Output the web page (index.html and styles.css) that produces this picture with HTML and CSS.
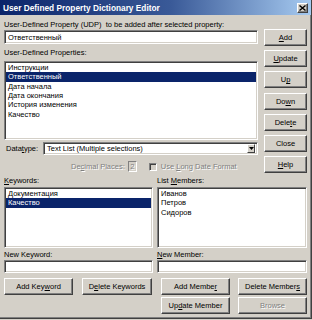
FILE: index.html
```html
<!DOCTYPE html>
<html>
<head>
<meta charset="utf-8">
<link rel="stylesheet" href="styles.css">
</head>
<body>
<div class="window">
  <div class="titlebar">
    <span class="title">User Defined Property Dictionary Editor</span>
    <span class="close"><svg width="7" height="6" viewBox="0 0 7 6"><path d="M0.5 0.5 L6.5 5.5 M6.5 0.5 L0.5 5.5" stroke="#000" stroke-width="1.4" fill="none"/></svg></span>
  </div>
  <div class="main">
    <div class="top">
      <div class="left">
        <div class="lbl">User-Defined Property (UDP)&nbsp; to be added after selected property:</div>
        <div class="field input">Ответственный</div>
        <div class="lbl lbl2">User-Defined Properties:</div>
        <div class="field list biglist">
          <div class="item">Инструкции</div>
          <div class="item sel">Ответственный</div>
          <div class="item">Дата начала</div>
          <div class="item">Дата окончания</div>
          <div class="item">История изменения</div>
          <div class="item">Качество</div>
        </div>
        <div class="dtrow">
          <span class="dtlabel">Data<u>t</u>ype:</span>
          <div class="field select">
            <span class="seltext">Text List (Multiple selections)</span>
            <span class="arrow"><svg width="5" height="3" viewBox="0 0 5 3"><path d="M0 0 H5 L2.5 3 Z" fill="#000"/></svg></span>
          </div>
        </div>
        <div class="decrow">
          <span class="dis">De<u>c</u>imal Places:</span>
          <span class="decbox dis">2</span>
          <span class="check"></span>
          <span class="dis chklabel">Use <u>L</u>ong Date Format</span>
        </div>
      </div>
      <div class="buttons">
        <div class="btn"><u>A</u>dd</div>
        <div class="btn"><u>U</u>pdate</div>
        <div class="btn">U<u>p</u></div>
        <div class="btn">Do<u>w</u>n</div>
        <div class="btn">Dele<u>t</u>e</div>
        <div class="btn">Close</div>
        <div class="btn"><u>H</u>elp</div>
      </div>
    </div>
    <div class="bottom">
      <div class="lbl"><u>K</u>eywords:</div>
      <div class="lbl">List <u>M</u>embers:</div>
      <div class="field list smalllist">
        <div class="item">Документация</div>
        <div class="item sel">Качество</div>
      </div>
      <div class="field list smalllist">
        <div class="item">Иванов</div>
        <div class="item">Петров</div>
        <div class="item">Сидоров</div>
      </div>
      <div class="lbl lbl3">New Keyword:</div>
      <div class="lbl lbl3"><u>N</u>ew Member:</div>
      <div class="field input2"></div>
      <div class="field input2"></div>
      <div class="btnrow">
        <div class="btn wbtn">Add Key<u>w</u>ord</div>
        <div class="btn wbtn2">D<u>e</u>lete Keywords</div>
      </div>
      <div class="btnrow rightrow">
        <div class="btn wbtn">Add Membe<u>r</u></div>
        <div class="btn wbtn">Delete Member<u>s</u></div>
      </div>
      <div class="spacer"></div>
      <div class="btnrow rightrow row2">
        <div class="btn wbtn">Up<u>d</u>ate Member</div>
        <div class="btn wbtn dis">Browse</div>
      </div>
    </div>
  </div>
</div>
</body>
</html>
```
FILE: styles.css
```css
html, body {
  margin: 0;
  padding: 0;
  background: #d4d0c8;
}
body {
  font-family: "Liberation Sans", Arial, sans-serif;
  font-size: 7.5px;
  color: #000;
}
.window {
  width: 312px;
  height: 319px;
  box-sizing: border-box;
  background: #d4d0c8;
  border-right: 1px solid #404040;
  border-bottom: 1px solid #404040;
  box-shadow: inset -1px -1px #808080;
  overflow: hidden;
}
.titlebar {
  height: 15px;
  background: linear-gradient(to right, #0a246a, #3a5a98 55%, #a6caf0);
  display: flex;
  align-items: center;
  justify-content: space-between;
  padding: 0 3px 0 3px;
}
.title {
  color: #fff;
  font-weight: bold;
  font-size: 8.3px;
  white-space: nowrap;
}
.close {
  width: 11px;
  height: 10px;
  box-sizing: border-box;
  background: #d4d0c8;
  border: 1px solid;
  border-color: #fff #404040 #404040 #fff;
  box-shadow: inset -1px -1px #808080;
  display: flex;
  align-items: center;
  justify-content: center;
}
.main {
  padding: 0 4px;
}
.top {
  display: flex;
  gap: 6px;
}
.left {
  width: 254px;
  padding-top: 5px;
}
.lbl {
  height: 9px;
  line-height: 9px;
  white-space: nowrap;
}
.lbl2 {
  margin-top: 4px;
}
.field {
  background: #fff;
  border: 1px solid;
  border-color: #808080 #fff #fff #808080;
  box-shadow: inset 1px 1px #404040, inset -1px -1px #d4d0c8;
  box-sizing: border-box;
}
.input {
  height: 14px;
  margin-top: 1px;
  padding: 2px 3px;
  line-height: 9px;
}
.list {
  padding: 1px;
  overflow: hidden;
}
.biglist {
  margin-top: 4px;
  height: 79px;
}
.item {
  height: 9.33px;
  line-height: 9.33px;
  padding-left: 2px;
  white-space: nowrap;
}
.item.sel {
  background: #0a246a;
  color: #fff;
}
.dtrow {
  display: flex;
  align-items: center;
  margin-top: 2px;
  height: 13px;
}
.dtlabel {
  width: 39px;
  padding-left: 2px;
  box-sizing: border-box;
}
.select {
  flex: 1;
  height: 13px;
  display: flex;
  align-items: center;
  justify-content: space-between;
  padding: 1px 2px 1px 3px;
}
.arrow {
  width: 8px;
  height: 9px;
  box-sizing: border-box;
  background: #d4d0c8;
  border: 1px solid;
  border-color: #fff #404040 #404040 #fff;
  display: flex;
  align-items: center;
  justify-content: center;
}
.decrow {
  margin-top: 6px;
  height: 11px;
  display: flex;
  align-items: center;
  padding-left: 67px;
}
.dis {
  color: #808080;
  text-shadow: 1px 1px #fff;
}
.decbox {
  margin-left: 3px;
  width: 9px;
  height: 11px;
  box-sizing: border-box;
  border: 1px solid;
  border-color: #808080 #fff #fff #808080;
  text-align: center;
  line-height: 9px;
}
.check {
  margin-left: 12px;
  width: 8px;
  height: 8px;
  box-sizing: border-box;
  border: 1px solid;
  border-color: #808080 #fff #fff #808080;
  box-shadow: inset 1px 1px #404040;
  background: #d4d0c8;
}
.chklabel {
  margin-left: 4px;
}
.buttons {
  width: 43px;
  padding-top: 14px;
  display: flex;
  flex-direction: column;
  gap: 4.2px;
}
.btn {
  height: 17px;
  box-sizing: border-box;
  background: #d4d0c8;
  border: 1px solid;
  border-color: #fff #404040 #404040 #fff;
  box-shadow: inset -1px -1px #808080;
  display: flex;
  align-items: center;
  justify-content: center;
  white-space: nowrap;
}
.bottom {
  margin-top: 3px;
  display: grid;
  grid-template-columns: 149px 150px;
  column-gap: 4px;
}
.smalllist {
  margin-top: 2px;
  height: 61px;
}
.lbl3 {
  margin-top: 2px;
}
.input2 {
  margin-top: 1px;
  height: 13px;
}
.btnrow {
  margin-top: 5px;
  display: flex;
  gap: 9px;
}
.rightrow {
  padding-left: 4px;
  gap: 8px;
}
.row2 {
  margin-top: 2px;
}
.wbtn {
  width: 69px;
}
.wbtn2 {
  width: 70px;
}
```
